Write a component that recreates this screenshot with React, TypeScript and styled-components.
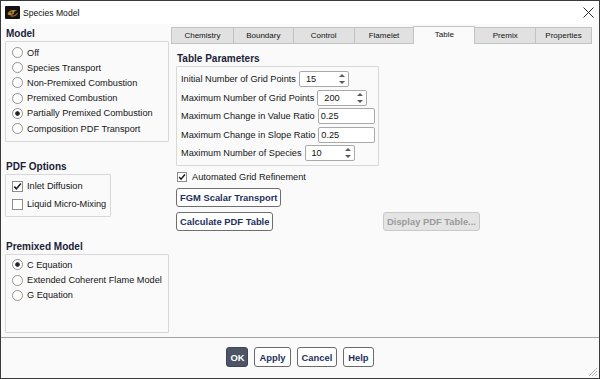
import styled, { createGlobalStyle } from 'styled-components';

const GlobalStyle = createGlobalStyle`
  html, body {
    margin: 0;
    padding: 0;
    background: #ffffff;
  }
  body {
    font-family: "Liberation Sans", Arial, sans-serif;
    font-size: 9.2px;
    color: #151515;
  }
  * {
    box-sizing: border-box;
  }
`;

const Window = styled.div`
  width: 600px;
  height: 379px;
  border: 1px solid #3a3a3a;
  background: #fafafa;
  display: flex;
  flex-direction: column;
`;

const TitleBar = styled.div`
  height: 23px;
  background: #ffffff;
  display: flex;
  align-items: center;
  padding: 0 5px 0 4px;
`;

const TitleText = styled.span`
  margin-left: 3px;
  font-size: 8.6px;
  color: #111111;
`;

const CloseButton = styled.div`
  margin-left: auto;
  width: 11px;
  height: 11px;
  display: flex;
`;

const Body = styled.div`
  flex: 1;
  min-height: 0;
  display: flex;
  gap: 2px;
  padding: 0 7px 0 4px;
`;

const LeftColumn = styled.div`
  width: 164px;
  padding-top: 3px;
  display: flex;
  flex-direction: column;
`;

const SectionLabel = styled.div<{ $top?: number }>`
  height: 14px;
  line-height: 14px;
  padding-left: 1px;
  margin-top: ${p => p.$top ?? 0}px;
  font-size: 10px;
  font-weight: bold;
  color: #1a2238;
`;

const GroupBox = styled.div<{ $width: number; $height: number; $padTop: number }>`
  width: ${p => p.$width}px;
  height: ${p => p.$height}px;
  border: 1px solid #d8d8d8;
  border-radius: 1px;
  padding-top: ${p => p.$padTop}px;
`;

const OptionRow = styled.div<{ $height: number }>`
  height: ${p => p.$height}px;
  display: flex;
  align-items: center;
  gap: 4px;
  padding-left: 6px;
  white-space: nowrap;
`;

const Radio = styled.span<{ $checked?: boolean }>`
  width: 11px;
  height: 11px;
  border-radius: 50%;
  border: 1px solid #929292;
  background: ${p =>
    p.$checked
      ? 'radial-gradient(circle, #262626 0 1.9px, #ffffff 2.6px)'
      : '#ffffff'};
  flex: none;
`;

const Box = styled.span<{ $size: number }>`
  width: ${p => p.$size}px;
  height: ${p => p.$size}px;
  border: 1px solid #8c8c8c;
  background: #ffffff;
  display: flex;
  align-items: center;
  justify-content: center;
  flex: none;
`;

const RightColumn = styled.div`
  width: 421px;
  padding-top: 2px;
  display: flex;
  flex-direction: column;
`;

const TabBar = styled.div`
  height: 18px;
  display: flex;
  align-items: flex-end;
  padding-left: 1px;
`;

const Tab = styled.div<{ $active?: boolean; $width: number }>`
  width: ${p => p.$width + 1}px;
  height: ${p => (p.$active ? 18 : 17)}px;
  margin-left: -1px;
  border: 1px solid #c2c2c2;
  border-bottom: ${p => (p.$active ? 'none' : '1px solid #c2c2c2')};
  background: ${p => (p.$active ? '#fafafa' : '#e1e1e1')};
  display: flex;
  align-items: center;
  justify-content: center;
  font-size: 8px;
  color: #111111;
  padding-bottom: ${p => (p.$active ? 2 : 0)}px;
`;

const Panel = styled.div`
  padding: 8px 0 0 5px;
  display: flex;
  flex-direction: column;
  align-items: flex-start;
`;

const ParamBox = styled.div`
  width: 203px;
  height: 100px;
  border: 1px solid #d8d8d8;
  border-radius: 1px;
  padding: 2.75px 0 0 4px;
`;

const ParamRow = styled.div`
  height: 18.5px;
  display: flex;
  align-items: center;
  gap: 3px;
  white-space: nowrap;
`;

const Field = styled.div<{ $width: number; $pad: number }>`
  width: ${p => p.$width}px;
  height: 16px;
  border: 1px solid #a9a9a9;
  border-radius: 2px;
  background: #ffffff;
  padding: 0 3px 0 ${p => p.$pad}px;
  display: flex;
  align-items: center;
  color: #111111;
`;

const SpinArrows = styled.span`
  margin-left: auto;
  display: flex;
  flex-direction: column;
  gap: 4px;
`;

const Arrow = styled.span<{ $down?: boolean }>`
  width: 0;
  height: 0;
  border-left: 3px solid transparent;
  border-right: 3px solid transparent;
  ${p =>
    p.$down
      ? 'border-top: 3px solid #5a5a5a;'
      : 'border-bottom: 3px solid #5a5a5a;'}
`;

const CheckRow = styled.div`
  margin-top: 4px;
  height: 14px;
  display: flex;
  align-items: center;
  gap: 5px;
  padding-left: 1px;
`;

const ActionButton = styled.button<{ $disabled?: boolean }>`
  height: 19px;
  padding: 0 3px;
  border: 1px solid ${p => (p.$disabled ? '#c9c9c9' : '#6e6e6e')};
  border-radius: 3px;
  background: ${p => (p.$disabled ? '#e4e4e4' : '#ffffff')};
  color: ${p => (p.$disabled ? '#9a9a9a' : '#1d3060')};
  font-family: "Liberation Sans", Arial, sans-serif;
  font-size: 9.4px;
  font-weight: bold;
  white-space: nowrap;
`;

const ButtonGrid = styled.div`
  margin-top: 5px;
  display: grid;
  grid-template-columns: 207px auto;
  justify-items: start;
`;

const FirstButton = styled(ActionButton)`
  margin-top: 4px;
`;

const Footer = styled.div`
  height: 41px;
  border-top: 1px solid #a5a5a5;
  display: flex;
  justify-content: center;
  align-items: flex-start;
  gap: 6px;
  padding-top: 9px;
  position: relative;
`;

const FooterButton = styled.button<{ $primary?: boolean }>`
  height: 20px;
  padding: 0 ${p => (p.$primary ? 3 : 4)}px;
  border: 1px solid ${p => (p.$primary ? '#3d4554' : '#6a6a6a')};
  border-radius: 3px;
  background: ${p => (p.$primary ? '#4c5466' : '#ffffff')};
  color: ${p => (p.$primary ? '#ffffff' : '#1d3060')};
  font-family: "Liberation Sans", Arial, sans-serif;
  font-size: 9.4px;
  font-weight: bold;
`;

const Grip = styled.svg`
  position: absolute;
  right: 1px;
  bottom: 1px;
`;

const AppIcon = () => (
  <svg width="15" height="13" viewBox="0 0 15 13">
    <rect width="15" height="13" rx="1" fill="#141210" />
    <path d="M2.5 8.2 C3.5 4.2 8.6 2.8 12.3 4.8 C10.2 4.9 8.4 5.8 8.9 7.6 C7 9.2 4.6 9.8 2.5 8.2Z" fill="#b7862c" />
    <path d="M5.5 9.6 C8 10.6 11 9.6 12.6 7.2" stroke="#8d6522" strokeWidth="1.2" fill="none" />
    <circle cx="6.4" cy="6.4" r="1" fill="#3b2a10" />
  </svg>
);

const CloseIcon = () => (
  <svg width="11" height="11" viewBox="0 0 11 11">
    <path d="M0.5 0.5 L10.5 10.5 M10.5 0.5 L0.5 10.5" stroke="#2a2a2a" strokeWidth="1" />
  </svg>
);

const Check = ({ size }: { size: number }) => (
  <svg width={size - 2} height={size - 2} viewBox="0 0 9 9">
    <path d="M1.3 4.6 L3.4 6.9 L7.8 1.6" stroke="#1a1a1a" strokeWidth="1.6" fill="none" />
  </svg>
);

const CheckBox = ({ checked, size = 11 }: { checked?: boolean; size?: number }) => (
  <Box $size={size}>{checked && <Check size={size} />}</Box>
);

const Spinner = ({ value, width }: { value: string; width: number }) => (
  <Field $width={width} $pad={6}>
    {value}
    <SpinArrows>
      <Arrow />
      <Arrow $down />
    </SpinArrows>
  </Field>
);

const models = [
  'Off',
  'Species Transport',
  'Non-Premixed Combustion',
  'Premixed Combustion',
  'Partially Premixed Combustion',
  'Composition PDF Transport',
];

const premixed = ['C Equation', 'Extended Coherent Flame Model', 'G Equation'];

const tabs = [
  { name: 'Chemistry', width: 62 },
  { name: 'Boundary', width: 60 },
  { name: 'Control', width: 61 },
  { name: 'Flamelet', width: 60 },
  { name: 'Table', width: 61 },
  { name: 'Premix', width: 61 },
  { name: 'Properties', width: 56 },
];

export default function App() {
  return (
    <>
      <GlobalStyle />
      <Window>
        <TitleBar>
          <AppIcon />
          <TitleText>Species Model</TitleText>
          <CloseButton>
            <CloseIcon />
          </CloseButton>
        </TitleBar>

        <Body>
          <LeftColumn>
            <SectionLabel>Model</SectionLabel>
            <GroupBox $width={164} $height={101} $padTop={3}>
              {models.map(m => (
                <OptionRow key={m} $height={15.2}>
                  <Radio $checked={m === 'Partially Premixed Combustion'} />
                  {m}
                </OptionRow>
              ))}
            </GroupBox>

            <SectionLabel $top={18}>PDF Options</SectionLabel>
            <GroupBox $width={106} $height={43} $padTop={2}>
              <OptionRow $height={18}>
                <CheckBox checked />
                Inlet Diffusion
              </OptionRow>
              <OptionRow $height={18}>
                <CheckBox />
                Liquid Micro-Mixing
              </OptionRow>
            </GroupBox>

            <SectionLabel $top={23}>Premixed Model</SectionLabel>
            <GroupBox $width={164} $height={79} $padTop={2.4}>
              {premixed.map(m => (
                <OptionRow key={m} $height={15.2}>
                  <Radio $checked={m === 'C Equation'} />
                  {m}
                </OptionRow>
              ))}
            </GroupBox>
          </LeftColumn>

          <RightColumn>
            <TabBar>
              {tabs.map(t => (
                <Tab key={t.name} $width={t.width} $active={t.name === 'Table'}>
                  {t.name}
                </Tab>
              ))}
            </TabBar>

            <Panel>
              <SectionLabel>Table Parameters</SectionLabel>
              <ParamBox>
                <ParamRow>
                  Initial Number of Grid Points
                  <Spinner value="15" width={50} />
                </ParamRow>
                <ParamRow>
                  Maximum Number of Grid Points
                  <Spinner value="200" width={50} />
                </ParamRow>
                <ParamRow>
                  Maximum Change in Value Ratio
                  <Field $width={57} $pad={2}>0.25</Field>
                </ParamRow>
                <ParamRow>
                  Maximum Change in Slope Ratio
                  <Field $width={57} $pad={2}>0.25</Field>
                </ParamRow>
                <ParamRow>
                  Maximum Number of Species
                  <Spinner value="10" width={50} />
                </ParamRow>
              </ParamBox>

              <CheckRow>
                <CheckBox checked size={10} />
                Automated Grid Refinement
              </CheckRow>

              <FirstButton>FGM Scalar Transport</FirstButton>
              <ButtonGrid>
                <ActionButton>Calculate PDF Table</ActionButton>
                <ActionButton $disabled>Display PDF Table...</ActionButton>
              </ButtonGrid>
            </Panel>
          </RightColumn>
        </Body>

        <Footer>
          <FooterButton $primary>OK</FooterButton>
          <FooterButton>Apply</FooterButton>
          <FooterButton>Cancel</FooterButton>
          <FooterButton>Help</FooterButton>
          <Grip width="10" height="10" viewBox="0 0 10 10">
            <path d="M9 1 L1 9 M9 4 L4 9 M9 7 L7 9" stroke="#b5b5b5" strokeWidth="1" />
          </Grip>
        </Footer>
      </Window>
    </>
  );
}
